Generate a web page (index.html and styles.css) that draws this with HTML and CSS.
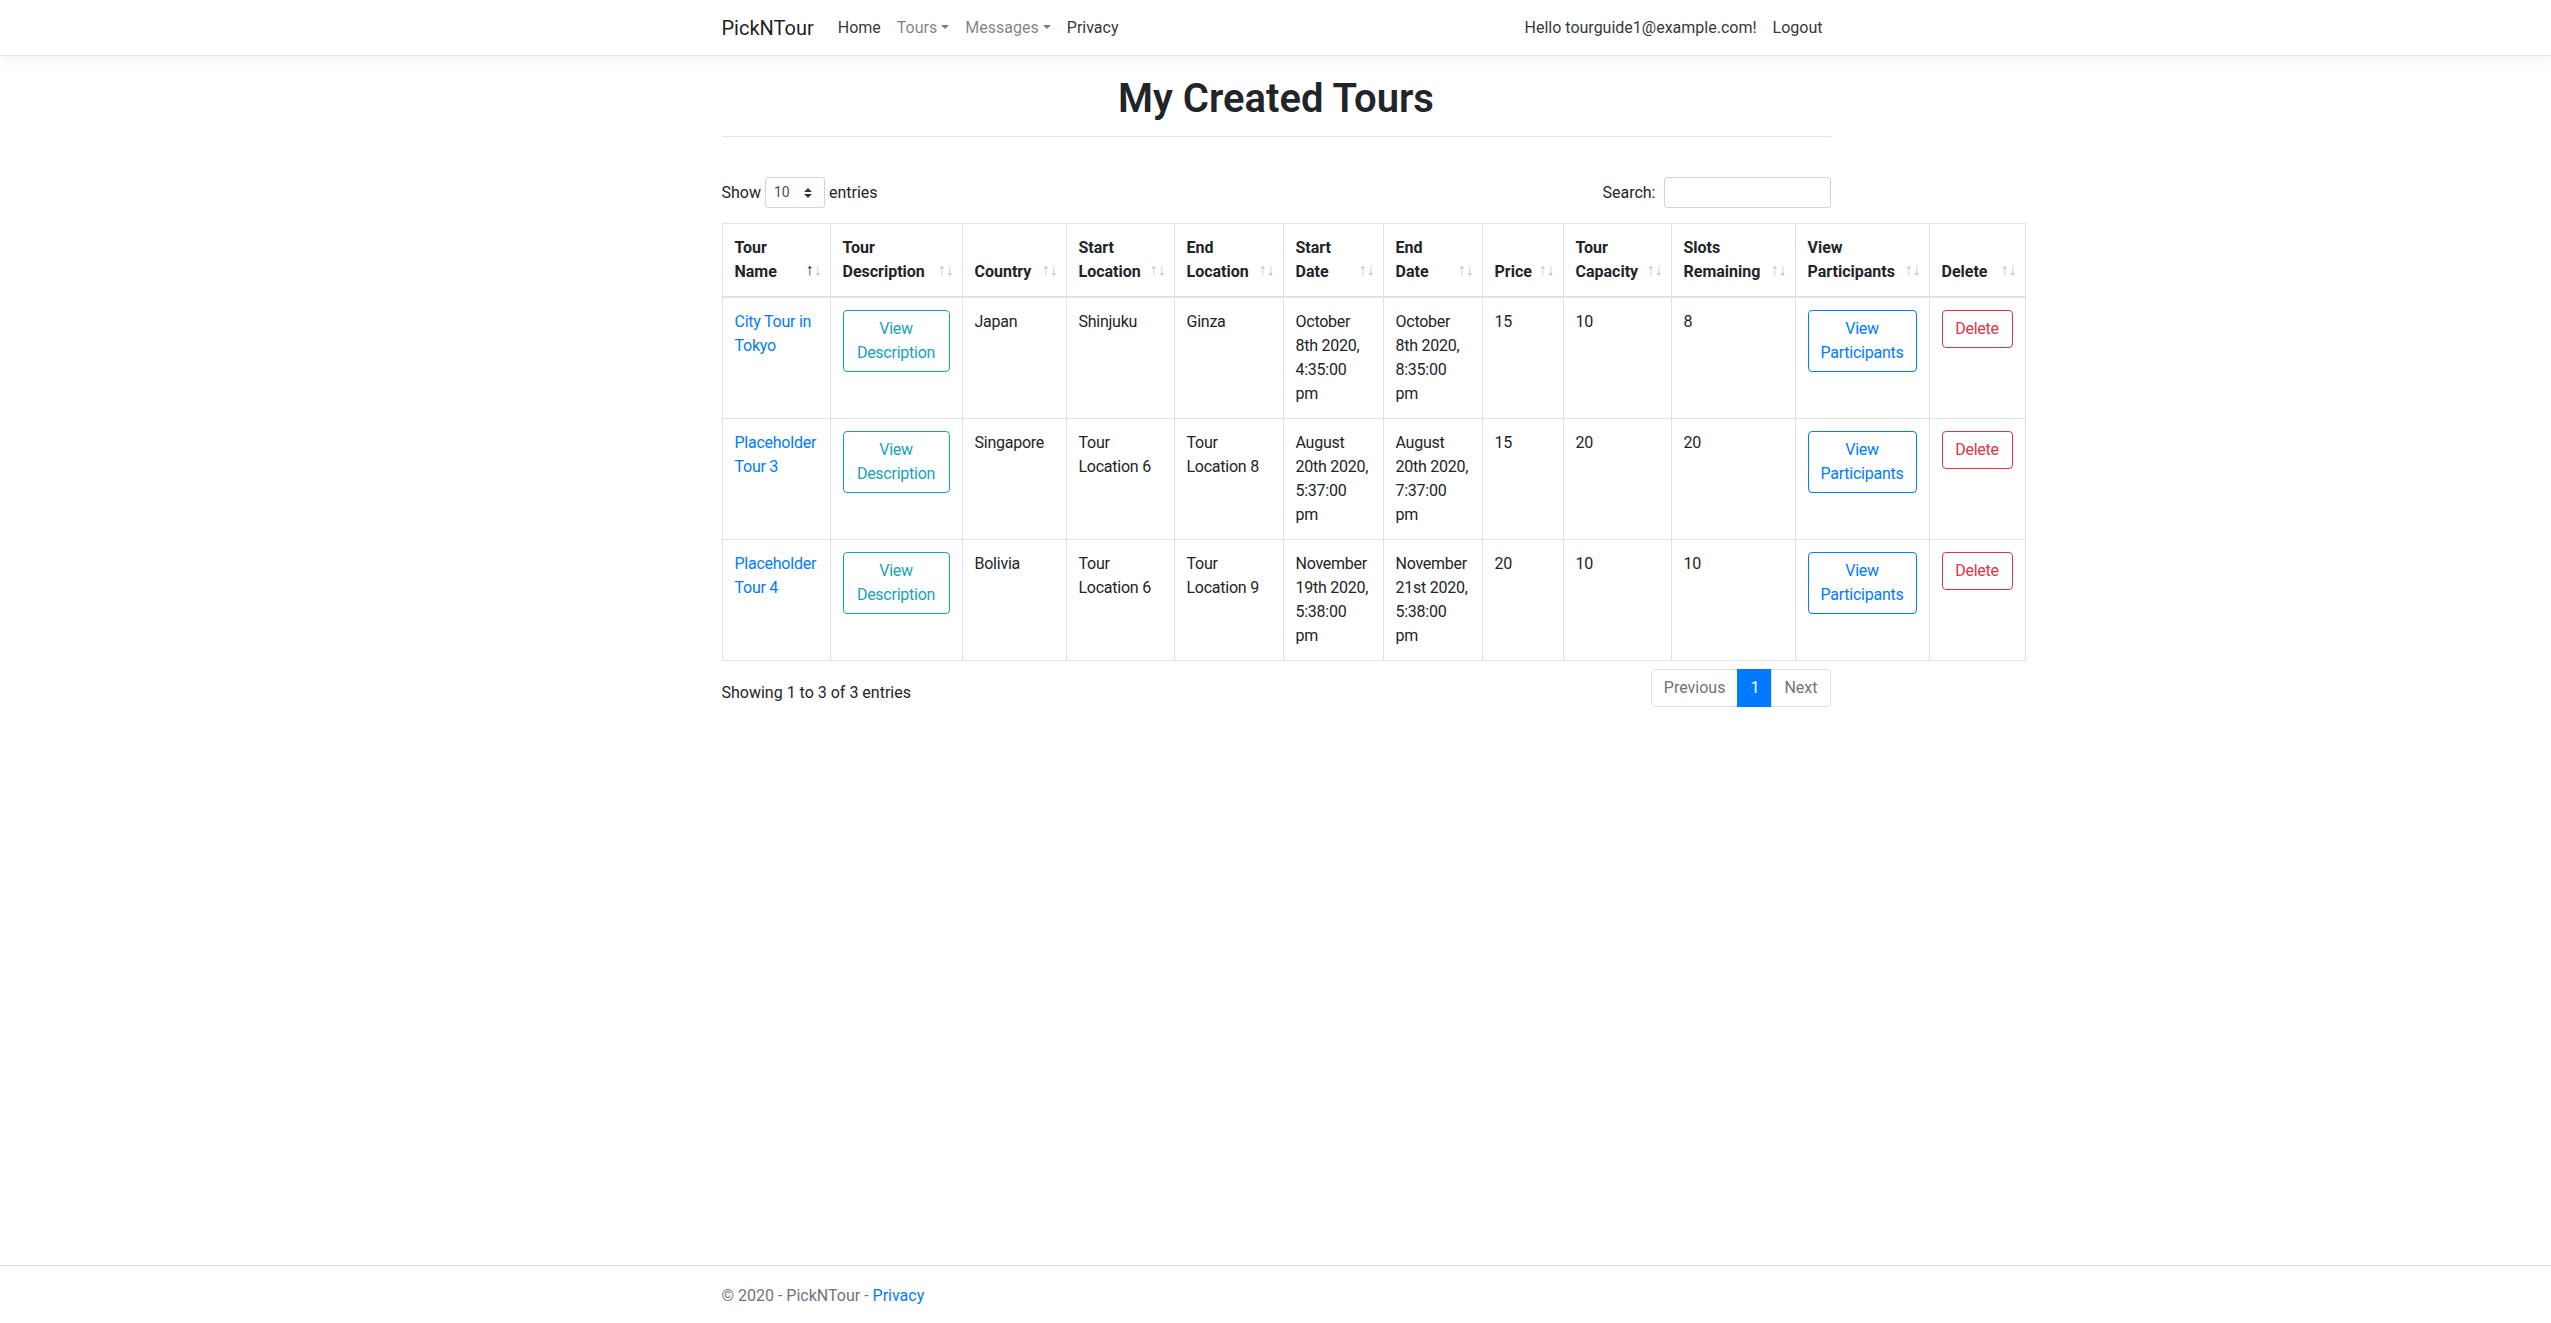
FILE: index.html
```html
<!DOCTYPE html>
<html lang="en">
<head>
<meta charset="utf-8">
<title>My Created Tours - PickNTour</title>
<link rel="stylesheet" href="styles.css">
</head>
<body>
<header>
  <nav class="navbar">
    <div class="container nav-inner">
      <a class="brand" href="#">PickNTour</a>
      <ul class="nav-list nav-grow">
        <li><a class="nav-link dark" href="#">Home</a></li>
        <li><a class="nav-link muted caret" href="#">Tours</a></li>
        <li><a class="nav-link muted caret" href="#">Messages</a></li>
        <li><a class="nav-link dark" href="#">Privacy</a></li>
      </ul>
      <ul class="nav-list">
        <li><a class="nav-link dark" href="#">Hello tourguide1@example.com!</a></li>
        <li><button class="nav-link dark btn-plain" type="button">Logout</button></li>
      </ul>
    </div>
  </nav>
</header>
<main class="container page">
  <h1 class="page-title">My Created Tours</h1>
  <hr class="rule">
  <div class="dt-wrapper">
    <div class="dt-top">
      <label class="dt-length">Show <span class="select-sm"><span>10</span><svg class="select-arrow" viewBox="0 0 4 5" width="8" height="10"><path d="M2 0L0 2h4zm0 5L0 3h4z" fill="#343a40"/></svg></span> entries</label>
      <label class="dt-search">Search:<input type="search" class="input-sm"></label>
    </div>
    <table class="dt-table">
      <colgroup>
        <col class="c-name"><col class="c-desc"><col class="c-country"><col class="c-start-loc"><col class="c-end-loc"><col class="c-start-date"><col class="c-end-date"><col class="c-price"><col class="c-cap"><col class="c-slots"><col class="c-part"><col class="c-del">
      </colgroup>
      <thead>
        <tr>
          <th class="sort sort-asc">Tour Name</th>
          <th class="sort">Tour Description</th>
          <th class="sort">Country</th>
          <th class="sort">Start Location</th>
          <th class="sort">End Location</th>
          <th class="sort">Start Date</th>
          <th class="sort">End Date</th>
          <th class="sort">Price</th>
          <th class="sort">Tour Capacity</th>
          <th class="sort">Slots Remaining</th>
          <th class="sort">View Participants</th>
          <th class="sort">Delete</th>
        </tr>
      </thead>
      <tbody>
        <tr>
          <td><a class="link" href="#">City Tour in Tokyo</a></td>
          <td><a class="btn btn-info" href="#">View Description</a></td>
          <td>Japan</td>
          <td>Shinjuku</td>
          <td>Ginza</td>
          <td>October 8th 2020, 4:35:00 pm</td>
          <td>October 8th 2020, 8:35:00 pm</td>
          <td>15</td>
          <td>10</td>
          <td>8</td>
          <td><a class="btn btn-primary" href="#">View Participants</a></td>
          <td><a class="btn btn-danger" href="#">Delete</a></td>
        </tr>
        <tr>
          <td><a class="link" href="#">Placeholder Tour 3</a></td>
          <td><a class="btn btn-info" href="#">View Description</a></td>
          <td>Singapore</td>
          <td>Tour Location 6</td>
          <td>Tour Location 8</td>
          <td>August 20th 2020, 5:37:00 pm</td>
          <td>August 20th 2020, 7:37:00 pm</td>
          <td>15</td>
          <td>20</td>
          <td>20</td>
          <td><a class="btn btn-primary" href="#">View Participants</a></td>
          <td><a class="btn btn-danger" href="#">Delete</a></td>
        </tr>
        <tr>
          <td><a class="link" href="#">Placeholder Tour 4</a></td>
          <td><a class="btn btn-info" href="#">View Description</a></td>
          <td>Bolivia</td>
          <td>Tour Location 6</td>
          <td>Tour Location 9</td>
          <td>November 19th 2020, 5:38:00 pm</td>
          <td>November 21st 2020, 5:38:00 pm</td>
          <td>20</td>
          <td>10</td>
          <td>10</td>
          <td><a class="btn btn-primary" href="#">View Participants</a></td>
          <td><a class="btn btn-danger" href="#">Delete</a></td>
        </tr>
      </tbody>
    </table>
    <div class="dt-bottom">
      <div class="dt-info">Showing 1 to 3 of 3 entries</div>
      <ul class="pagination">
        <li><a class="page-link first" href="#">Previous</a></li>
        <li><a class="page-link active" href="#">1</a></li>
        <li><a class="page-link last" href="#">Next</a></li>
      </ul>
    </div>
  </div>
</main>
<footer class="footer">
  <div class="container">&copy; 2020 - PickNTour - <a class="link" href="#">Privacy</a></div>
</footer>
</body>
</html>
```

FILE: styles.css
```css
html {
  background: #fff;
}

body {
  margin: 0;
  min-height: 100vh;
  display: flex;
  flex-direction: column;
  font-family: Roboto, "Liberation Sans", sans-serif;
  font-size: 16px;
  line-height: 1.5;
  color: #212529;
  background: #fff;
}

.container {
  box-sizing: border-box;
  width: 100%;
  max-width: 1140px;
  margin: 0 auto;
  padding: 0 15px 0 16px;
}

/* Navbar */
.navbar {
  padding: 8px 16px 7px;
  background: #fff;
  border-bottom: 1px solid #dee2e6;
  box-shadow: 0 4px 12px rgba(0, 0, 0, 0.05);
  margin-bottom: 16px;
}

.nav-inner {
  display: flex;
  align-items: center;
}

.brand {
  font-size: 20px;
  line-height: 30px;
  padding: 5px 0;
  margin-right: 16px;
  color: rgba(0, 0, 0, 0.9);
  text-decoration: none;
}

.nav-list {
  display: flex;
  list-style: none;
  margin: 0;
  padding: 0;
}

.nav-grow {
  flex: 1;
}

.nav-link {
  display: block;
  padding: 8px;
  line-height: 24px;
  font-size: 16px;
  text-decoration: none;
}

.btn-plain {
  border: 0;
  background: none;
  font-family: inherit;
  cursor: pointer;
}

.dark {
  color: #343a40;
}

.muted {
  color: rgba(0, 0, 0, 0.5);
}

.caret::after {
  content: "";
  display: inline-block;
  margin-left: 0.255em;
  vertical-align: 0.255em;
  border-top: 0.3em solid;
  border-right: 0.3em solid transparent;
  border-left: 0.3em solid transparent;
  border-bottom: 0;
}

/* Page heading */
.page {
  flex: 1;
}

.page-title {
  margin: 0;
  padding-top: 3px;
  font-size: 40px;
  line-height: 1.2;
  font-weight: 600;
  text-align: center;
}

.rule {
  margin: 13px 0 16px;
  border: 0;
  border-top: 1px solid rgba(0, 0, 0, 0.1);
}

/* DataTables wrapper */
.dt-wrapper {
  padding-top: 24px;
}

.dt-top {
  display: flex;
  justify-content: space-between;
  align-items: center;
  height: 31px;
  margin-bottom: 15px;
}

.dt-length,
.dt-search {
  display: flex;
  align-items: center;
  gap: 4px;
  white-space: nowrap;
}

.select-sm {
  box-sizing: border-box;
  display: inline-flex;
  align-items: center;
  justify-content: space-between;
  width: 60px;
  height: 31px;
  padding: 0 12px 0 8px;
  border: 1px solid #ced4da;
  border-radius: 3px;
  font-size: 14px;
  color: #495057;
}

.select-arrow {
  display: block;
}

.input-sm {
  box-sizing: border-box;
  width: 167px;
  height: 31px;
  margin: 0 0 0 4px;
  padding: 4px 8px;
  border: 1px solid #ced4da;
  border-radius: 3px;
  font-size: 14px;
}

/* Table */
.dt-table {
  table-layout: fixed;
  width: 1303px;
  border-collapse: collapse;
}

.c-name { width: 108px; }
.c-desc { width: 132px; }
.c-country { width: 104px; }
.c-start-loc { width: 108px; }
.c-end-loc { width: 109px; }
.c-start-date { width: 100px; }
.c-end-date { width: 99px; }
.c-price { width: 81px; }
.c-cap { width: 108px; }
.c-slots { width: 124px; }
.c-part { width: 134px; }
.c-del { width: 96px; }

.dt-table th,
.dt-table td {
  border: 1px solid #dee2e6;
  text-align: left;
}

.dt-table th {
  position: relative;
  padding: 12px 30px 12px 12px;
  vertical-align: bottom;
  font-weight: 700;
  border-bottom-width: 2px;
}

.dt-table td {
  padding: 12px;
  vertical-align: top;
  letter-spacing: -0.25px;
}

.sort::before,
.sort::after {
  position: absolute;
  bottom: 0.9em;
  display: block;
  opacity: 0.3;
  font-weight: 400;
  line-height: 24px;
}

.sort::before {
  content: "\2191";
  right: 1em;
}

.sort::after {
  content: "\2193";
  right: 0.5em;
}

.sort-asc::before {
  opacity: 1;
}

.link {
  color: #007bff;
  text-decoration: none;
}

.btn {
  display: block;
  padding: 6px 12px;
  border: 1px solid;
  border-radius: 4px;
  text-align: center;
  text-decoration: none;
  line-height: 24px;
  background: transparent;
}

.btn-info {
  color: #17a2b8;
  border-color: #17a2b8;
}

.btn-primary {
  color: #007bff;
  border-color: #007bff;
}

.btn-danger {
  color: #dc3545;
  border-color: #dc3545;
}

/* Bottom row */
.dt-bottom {
  display: flex;
  justify-content: space-between;
  align-items: flex-start;
  margin-top: 6px;
}

.dt-info {
  padding-top: 0.85em;
  white-space: nowrap;
}

.pagination {
  display: flex;
  list-style: none;
  margin: 2px 0 0;
  padding: 0;
}

.page-link {
  display: block;
  padding: 8px 12px;
  margin-left: -1px;
  line-height: 20px;
  border: 1px solid #dee2e6;
  color: #6c757d;
  background: #fff;
  text-decoration: none;
}

.page-link.first {
  margin-left: 0;
  border-radius: 4px 0 0 4px;
}

.page-link.last {
  border-radius: 0 4px 4px 0;
}

.page-link.active {
  color: #fff;
  background: #007bff;
  border-color: #007bff;
}

/* Footer */
.footer {
  box-sizing: border-box;
  height: 58px;
  overflow: hidden;
  border-top: 1px solid #dee2e6;
  line-height: 60px;
  white-space: nowrap;
  color: #6c757d;
}
```
